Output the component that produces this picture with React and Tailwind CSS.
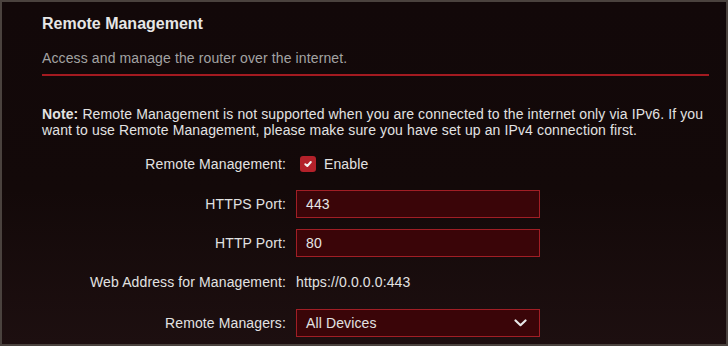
import React from 'react';

function Row({ label, children, className = '' }) {
    return (
        <div className={`flex items-center ${className}`}>
            <div className="w-[244px] text-right shrink-0">{label}</div>
            <div className="ml-[10px] flex items-center">{children}</div>
        </div>
    );
}

function TextInput({ value }) {
    return (
        <div className="w-[244px] h-[28px] border border-[#a11e25] bg-[#3a0508] flex items-center pl-[9px] text-[#e6e6e6]">
            {value}
        </div>
    );
}

export default function App() {
    return (
        <div
            className="w-[728px] h-[346px] overflow-hidden border-2 border-[#4a423e] bg-[linear-gradient(180deg,#120809_0%,#130909_55%,#1d0f10_100%)] text-[14px] leading-[16px] tracking-[0.12px] text-[#e2e2e2]"
            style={{ fontFamily: '"Liberation Sans", Arial, sans-serif' }}
        >
            <div className="pl-[40px] pr-[17px] pt-[12px]">
                <h1 className="text-[16px] leading-[20px] font-bold tracking-normal text-[#e6e6e6]">Remote Management</h1>
                <p className="mt-[15px] leading-[18px] text-[#a3a3a3]">Access and manage the router over the internet.</p>
                <div className="mt-[7px] h-[2px] bg-[#a31a20]" />

                <p className="mt-[30px] text-[#e2e2e2]">
                    <b>Note:</b> Remote Management is not supported when you are connected to the internet only via IPv6. If you want to use Remote Management, please make sure you have set up an IPv4 connection first.
                </p>

                <Row label="Remote Management:" className="mt-[16px] h-[20px]">
                    <div className="ml-[4px] w-[16px] h-[16px] rounded-[3px] bg-[#b3212a] flex items-center justify-center">
                        <svg width="10" height="10" viewBox="0 0 10 10">
                            <path d="M2.3 5.2 L4.3 7 L7.8 3" fill="none" stroke="#f4f4f4" strokeWidth="2" strokeLinecap="round" strokeLinejoin="round" />
                        </svg>
                    </div>
                    <span className="ml-[8px]">Enable</span>
                </Row>

                <Row label="HTTPS Port:" className="mt-[16px]">
                    <TextInput value="443" />
                </Row>

                <Row label="HTTP Port:" className="mt-[11px]">
                    <TextInput value="80" />
                </Row>

                <Row label="Web Address for Management:" className="mt-[15px] h-[20px]">
                    <span>https://0.0.0.0:443</span>
                </Row>

                <Row label="Remote Managers:" className="mt-[17px]">
                    <div className="w-[244px] h-[28px] border border-[#a11e25] bg-[#3a0508] flex items-center justify-between pl-[9px] pr-[12px]">
                        <span>All Devices</span>
                        <svg width="13" height="8" viewBox="0 0 13 8">
                            <path d="M1.5 1.5 L6.5 6.2 L11.5 1.5" fill="none" stroke="#e8e8e8" strokeWidth="2.2" strokeLinecap="round" strokeLinejoin="round" />
                        </svg>
                    </div>
                </Row>
            </div>
        </div>
    );
}
